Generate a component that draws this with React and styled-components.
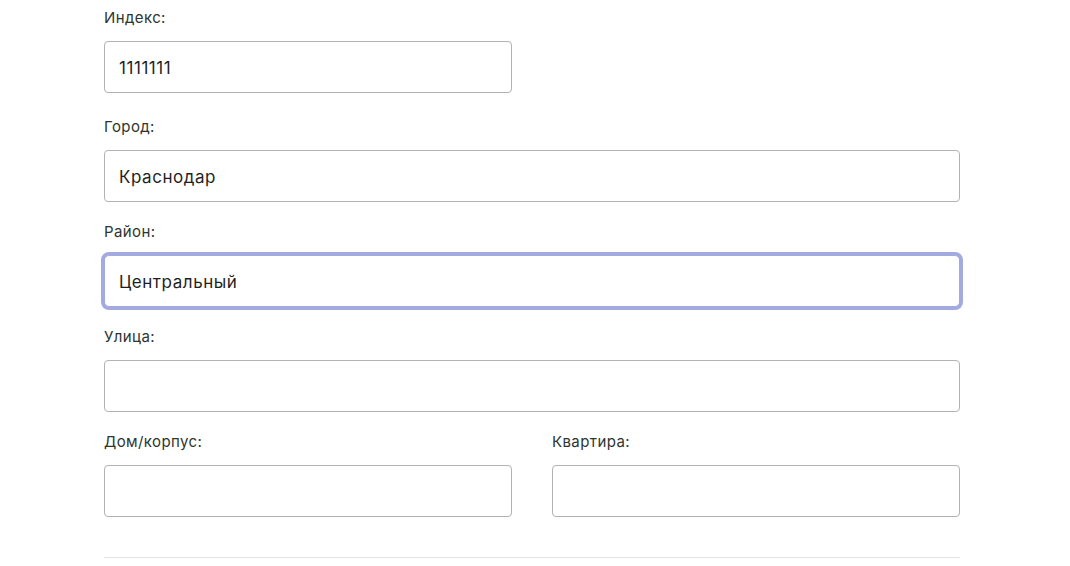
import React from 'react'
import styled, { createGlobalStyle, css } from 'styled-components'

const GlobalStyle = createGlobalStyle`
    body {
        margin: 0;
        background: #fff;
        font-family: Inter, "Noto Sans", sans-serif;
    }
`

const Form = styled.form`
    width: 856px;
    margin-left: 104px;
    padding-top: 8px;
    display: flex;
    flex-direction: column;
    gap: 20px;
`

const Row = styled.div`
    display: grid;
    grid-template-columns: ${({ $cols }) => $cols === 2 ? '1fr 1fr' : '1fr'};
    column-gap: 40px;
    margin-bottom: ${({ $extra }) => $extra ? '4px' : '0'};
`

const Field = styled.label`
    display: flex;
    flex-direction: column;
    gap: 13px;
`

const Caption = styled.span`
    font-size: 15px;
    line-height: 20px;
    letter-spacing: 0.4px;
    color: #2d3530;
`

const Input = styled.input`
    box-sizing: border-box;
    height: 52px;
    width: 100%;
    padding: 1px 14px 0;
    border: 1px solid #b3b3b3;
    border-radius: 4px;
    font-family: Inter, "Noto Sans", sans-serif;
    font-size: 17px;
    letter-spacing: 0.55px;
    color: #1f1f1f;
    background: #fff;
    outline: none;

    ${({ $focused }) => $focused && css`
        border-color: #a3aadf;
        border-radius: 5px;
        box-shadow: 0 0 0 3px #a3aadf;
    `}
`

const Divider = styled.hr`
    margin: 20px 0 0;
    border: none;
    border-top: 1px solid #e3e3e3;
`

const TextField = ({ label, value, focused }) => (
    <Field>
        <Caption>{label}</Caption>
        <Input defaultValue={value} $focused={focused} />
    </Field>
)

export default function App() {
    return (
        <>
            <GlobalStyle />
            <Form onSubmit={e => e.preventDefault()}>
                <Row $cols={2} $extra>
                    <TextField label="Индекс:" value="1111111" />
                </Row>
                <Row>
                    <TextField label="Город:" value="Краснодар" />
                </Row>
                <Row>
                    <TextField label="Район:" value="Центральный" focused />
                </Row>
                <Row>
                    <TextField label="Улица:" value="" />
                </Row>
                <Row $cols={2}>
                    <TextField label="Дом/корпус:" value="" />
                    <TextField label="Квартира:" value="" />
                </Row>
                <Divider />
            </Form>
        </>
    )
}
